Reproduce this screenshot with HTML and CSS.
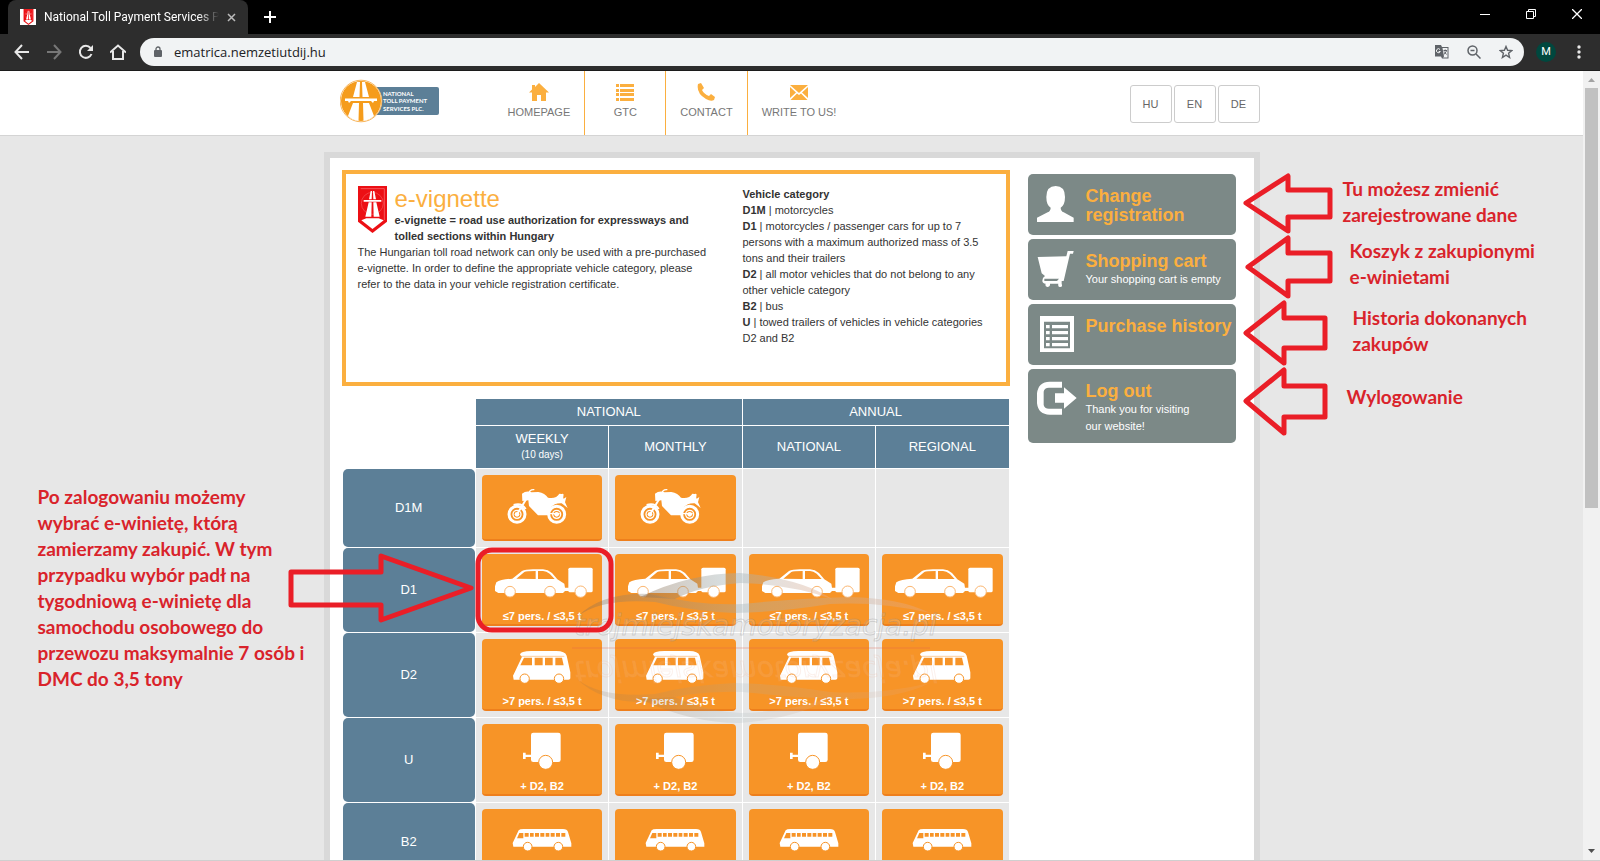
FILE: index.html
```html
<!DOCTYPE html>
<html lang="en">
<head>
<meta charset="utf-8">
<title>National Toll Payment Services PLC</title>
<link rel="stylesheet" href="styles.css">
</head>
<body>
<svg class="defs" aria-hidden="true">
  <symbol id="shield" viewBox="0 0 87 141">
    <path fill="#ec0f14" d="M0 0H87V107L43.500 141 0 107Z"/>
    <path fill="none" stroke="#f9797c" stroke-width="2" d="M8 8H79V102"/>
    <circle cx="43" cy="52" r="33" fill="none" stroke="#f4585c" stroke-width="2"/>
    <path fill="#fff" d="M38 15H42L41 40H33ZM45 15H49L54 40H46ZM17 42H70V47H17ZM32 49H41L40 92H22ZM46 49H55L65 92H47ZM10 103 25 97H62L77 103 43.500 129Z"/>
  </symbol>
  <symbol id="moto" viewBox="457 255 360 162">
    <g fill="none" stroke="#fff">
      <circle cx="562" cy="358" r="24" stroke-width="9"/><circle cx="562" cy="358" r="12" stroke-width="4"/>
      <circle cx="681" cy="358" r="24" stroke-width="9"/><circle cx="681" cy="358" r="12" stroke-width="4"/>
      <path stroke-width="6" d="M562 358 592 308M552 330Q576 322 588 342"/>
      <path stroke-width="4" d="M614 284Q600 282 596 298M650 356H690"/>
    </g>
    <circle cx="562" cy="358" r="7" fill="#fff"/><circle cx="681" cy="358" r="7" fill="#fff"/>
    <path fill="#fff" d="M577 296Q590 286 606 292L626 291Q646 295 655 308Q680 312 689 296L702 298 700 308 714 339 696 325Q672 324 661 341L655 361H625L598 333 596 316 578 318Z"/>
    <path fill="#fff" d="M690 298 700 296 701 312 710 306 706 322H688Z"/>
  </symbol>
  <symbol id="car" viewBox="457 492 360 162">
    <path fill="#fff" d="M500 574Q512 565 548 563L577 540Q586 535 610 535H640Q655 536 667 546L683 565 704 578 706 590H718V600H706L700 606H506L496 600V586Z"/>
    <path fill="#f79427" d="M560 563 584 543Q590 540 618 540V564ZM625 540H640Q650 540 660 548L675 564H625Z"/>
    <rect x="716" y="530" width="73" height="74" rx="5" fill="#fff"/>
    <g fill="#fff" stroke="#fbb670" stroke-width="3"><circle cx="541" cy="602" r="16"/><circle cx="661" cy="602" r="16"/><circle cx="753" cy="602" r="17"/></g>
  </symbol>
  <symbol id="van" viewBox="457 28 360 162">
    <path fill="#fff" d="M571 72Q572 61 605 61H680Q706 61 711 75L722 125V143Q722 147 716 147H552L550 135 558 119 577 78Z"/>
    <path fill="none" stroke="#fbb670" stroke-width="2" d="M574 77H704"/>
    <path fill="#f79427" d="M583 81H607V104H572ZM615 81H639V104H615ZM646 81H669V104H646ZM677 81H697L702 104H677Z"/>
    <g fill="#fff" stroke="#f79427" stroke-width="3"><circle cx="585" cy="144" r="14"/><circle cx="688" cy="144" r="14"/></g>
  </symbol>
  <symbol id="trailer" viewBox="457 283 360 162">
    <rect x="604" y="306" width="89" height="88" rx="7" fill="#fff"/>
    <path fill="#fff" d="M580 366H588V372H606V379H588V385H580Z"/>
    <circle cx="648" cy="395" r="21" fill="#fff" stroke="#f79427" stroke-width="3"/>
  </symbol>
  <symbol id="bus" viewBox="457 538 360 162">
    <path fill="#fff" d="M567 587Q570 583 582 583H700Q713 583 715 592L725 626V636H551L549 625Z"/>
    <path fill="#f79427" d="M569 595H581V611H562ZM585 595H597V606H585ZM601 595H612V606H601ZM616 595H628V606H616ZM632 595H644V606H632ZM648 595H659V606H648ZM663 595H675V606H663ZM679 595H691V606H679ZM695 595H707V606H695Z"/>
    <g fill="#fff" stroke="#f79427" stroke-width="3"><circle cx="594" cy="636" r="13"/><circle cx="686" cy="636" r="13"/></g>
  </symbol>
</svg>

<div class="tabstrip">
  <div class="tab">
    <span class="favicon"><svg width="11" height="16"><use href="#shield"/></svg></span>
    <span class="tab-title">National Toll Payment Services PLC</span>
    <button class="plain" aria-label="Close tab"><svg width="9" height="9" viewBox="0 0 9 9"><path d="M1 1 8 8M8 1 1 8" stroke="#bbb" stroke-width="1.500"/></svg></button>
  </div>
  <button class="plain newtab" aria-label="New tab"><svg width="12" height="12" viewBox="0 0 12 12"><path d="M6 0V12M0 6H12" stroke="#fff" stroke-width="2"/></svg></button>
  <div class="window-controls">
    <button class="plain" aria-label="Minimize"><svg width="10" height="10" viewBox="0 0 10 10"><path d="M0 5.500H10" stroke="#fff"/></svg></button>
    <button class="plain" aria-label="Restore"><svg width="10" height="10" viewBox="0 0 10 10" fill="none" stroke="#fff"><path d="M.5 2.500H7.500V9.500H.5ZM2.500 2.500V.5H9.500V7.500H7.500"/></svg></button>
    <button class="plain" aria-label="Close"><svg width="10" height="10" viewBox="0 0 10 10"><path d="M0 0 10 10M10 0 0 10" stroke="#fff" stroke-width="1.300"/></svg></button>
  </div>
</div>

<div class="toolbar">
  <div class="nav-buttons">
    <button class="plain" aria-label="Back"><svg width="16" height="16" viewBox="0 0 16 16" fill="none" stroke="#e8e8e8" stroke-width="2"><path d="M15 8H2M8 1 1.500 8 8 15"/></svg></button>
    <button class="plain" aria-label="Forward"><svg width="16" height="16" viewBox="0 0 16 16" fill="none" stroke="#777" stroke-width="2"><path d="M1 8H14M8 1 14.500 8 8 15"/></svg></button>
    <button class="plain" aria-label="Reload"><svg width="16" height="16" viewBox="0 0 16 16"><path d="M13.500 10A6 6 0 1 1 12.500 4" fill="none" stroke="#e8e8e8" stroke-width="2"/><path d="M15 1V7H9Z" fill="#e8e8e8"/></svg></button>
    <button class="plain" aria-label="Home"><svg width="16" height="16" viewBox="0 0 16 16" fill="none" stroke="#e8e8e8" stroke-width="2"><path d="M0 8.500 8 1.500 16 8.500M3 7V15H13V7"/></svg></button>
  </div>
  <div class="omnibox">
    <svg width="10" height="12" viewBox="0 0 10 12"><rect x="1" y="4" width="8" height="7" rx="1" fill="#5f6368"/><path d="M3 5V3A2 2 0 0 1 7 3V5" fill="none" stroke="#5f6368" stroke-width="1.300"/></svg>
    <input class="url" aria-label="Address" value="ematrica.nemzetiutdij.hu">
    <button class="plain" aria-label="Translate"><svg width="14" height="14" viewBox="0 0 14 14"><path d="M0 0H6L7 2H13.500V13.500H7L6 11.500H0Z" fill="#5f6368"/><path d="M7.500 3H12.500V12.500H8L9 11.500Z" fill="#f1f3f4"/><path d="M5 4.500A2 2 0 1 0 5.300 6.500H3.700" fill="none" stroke="#f1f3f4"/><path d="M8.500 5.500H12M10.200 4.500V5.500M11.500 6 9 9.500M9.200 6.500 11.500 9.500" stroke="#5f6368" fill="none"/></svg></button>
    <button class="plain" aria-label="Zoom out"><svg width="14" height="14" viewBox="0 0 14 14" fill="none" stroke="#5f6368" stroke-width="1.500"><circle cx="5.500" cy="5.500" r="4.500"/><path d="M9 9 13.500 13.500M3.500 5.500H7.500"/></svg></button>
    <button class="plain" aria-label="Bookmark"><svg width="14" height="14" viewBox="0 0 14 14" fill="none" stroke="#5f6368" stroke-width="1.400"><path d="M7 1.500 8.600 5.300 12.800 5.600 9.600 8.300 10.600 12.500 7 10.200 3.400 12.500 4.400 8.300 1.200 5.600 5.400 5.300Z"/></svg></button>
  </div>
  <button class="avatar">M</button>
  <button class="plain" aria-label="Menu"><svg width="4" height="14" viewBox="0 0 4 14" fill="#e8e8e8"><circle cx="2" cy="2" r="1.700"/><circle cx="2" cy="7" r="1.700"/><circle cx="2" cy="12" r="1.700"/></svg></button>
</div>

<div class="viewport">
  <div class="page">
    <header class="site-header">
      <div class="header-inner">
        <a class="logo" href="#" aria-label="National Toll Payment Services Plc.">
          <svg width="100" height="44" viewBox="0 0 100 44">
            <rect x="20" y="8" width="79" height="28" rx="2" fill="#5c7f97"/>
            <circle cx="21" cy="22" r="20.500" fill="#f59c1c" stroke="#fff"/><circle cx="21" cy="22" r="20.800" fill="none" stroke="#f8b760"/>
            <path fill="#fff" d="M17 3H20L19.500 18H13ZM22 3H25L29 18H22.500ZM5 19.500H37V22H34L33 24 31 22H11L9 24 8 22H5ZM13 24H19L18.500 42Q12 41 8 37ZM23 24H29L34 37Q30 41 23.500 42Z"/>
            <text class="logo-text" x="43" y="17">NATIONAL</text>
            <text class="logo-text" x="43" y="24">TOLL PAYMENT</text>
            <text class="logo-text" x="43" y="32">SERVICES PLC.</text>
          </svg>
        </a>
        <nav class="menu">
          <a href="#"><svg width="20" height="18" viewBox="0 0 20 18"><path fill="#fbaf3f" d="M10 0 20 9.500H17V18H12V12H8V18H3V9.500H0L3 6.500V2H6V4Z"/></svg>HOMEPAGE</a>
          <a href="#"><svg width="20" height="18" viewBox="0 0 20 18"><path fill="#fbaf3f" d="M1 1H4V4H1ZM5 1H19V4H5ZM1 6H4V9H1ZM5 6H19V9H5ZM1 10H4V13H1ZM5 10H19V13H5ZM1 15H4V18H1ZM5 15H19V18H5Z"/></svg>GTC</a>
          <a href="#"><svg width="20" height="18" viewBox="0 0 20 18"><path fill="#fbaf3f" d="M2 1 5 0 8 5 6 7Q8 11 13 13L15 11 19 14 18 17Q15 19 10 16Q0 10 2 1Z"/></svg>CONTACT</a>
          <a href="#"><svg width="20" height="18" viewBox="0 0 20 18"><path fill="#fbaf3f" d="M1 2H19L10 10ZM1 4 7 9.500 1 15ZM19 4V15L13 9.500ZM8 10.500 10 12 12 10.500 18.500 17H1.500Z"/></svg>WRITE TO US!</a>
        </nav>
        <div class="langs"><button>HU</button><button>EN</button><button>DE</button></div>
      </div>
    </header>

    <div class="stage">
      <main class="panel">
        <div class="content">
          <section class="info">
            <div>
              <svg class="shield" width="29" height="47"><use href="#shield"/></svg>
              <div class="info-head">
                <h1>e-vignette</h1>
                <strong>e-vignette = road use authorization for expressways and tolled sections within Hungary</strong>
              </div>
              <p>The Hungarian toll road network can only be used with a pre-purchased e-vignette. In order to define the appropriate vehicle category, please refer to the data in your vehicle registration certificate.</p>
            </div>
            <div>
              <p><b>Vehicle category</b></p>
              <p><b>D1M</b> | motorcycles</p>
              <p><b>D1</b> | motorcycles / passenger cars for up to 7 persons with a maximum authorized mass of 3.5 tons and their trailers</p>
              <p><b>D2</b> | all motor vehicles that do not belong to any other vehicle category</p>
              <p><b>B2</b> | bus</p>
              <p><b>U</b> | towed trailers of vehicles in vehicle categories D2 and B2</p>
            </div>
          </section>

          <table class="rates">
            <thead>
              <tr class="r-group"><td class="blank" rowspan="2"></td><th colspan="2">NATIONAL</th><th colspan="2">ANNUAL</th></tr>
              <tr class="r-period"><th>WEEKLY<small>(10 days)</small></th><th>MONTHLY</th><th>NATIONAL</th><th>REGIONAL</th></tr>
            </thead>
            <tbody>
              <tr class="r-short"><th scope="row">D1M</th>
                <td><button aria-label="D1M weekly"><svg><use href="#moto"/></svg></button></td>
                <td><button aria-label="D1M monthly"><svg><use href="#moto"/></svg></button></td><td></td><td></td></tr>
              <tr><th scope="row">D1</th>
                <td><button><svg><use href="#car"/></svg>≤7 pers. / ≤3,5 t</button></td>
                <td><button><svg><use href="#car"/></svg>≤7 pers. / ≤3,5 t</button></td>
                <td><button><svg><use href="#car"/></svg>≤7 pers. / ≤3,5 t</button></td>
                <td><button><svg><use href="#car"/></svg>≤7 pers. / ≤3,5 t</button></td></tr>
              <tr><th scope="row">D2</th>
                <td><button><svg><use href="#van"/></svg>&gt;7 pers. / ≤3,5 t</button></td>
                <td><button><svg><use href="#van"/></svg>&gt;7 pers. / ≤3,5 t</button></td>
                <td><button><svg><use href="#van"/></svg>&gt;7 pers. / ≤3,5 t</button></td>
                <td><button><svg><use href="#van"/></svg>&gt;7 pers. / ≤3,5 t</button></td></tr>
              <tr><th scope="row">U</th>
                <td><button><svg><use href="#trailer"/></svg>+ D2, B2</button></td>
                <td><button><svg><use href="#trailer"/></svg>+ D2, B2</button></td>
                <td><button><svg><use href="#trailer"/></svg>+ D2, B2</button></td>
                <td><button><svg><use href="#trailer"/></svg>+ D2, B2</button></td></tr>
              <tr class="r-last"><th scope="row">B2</th>
                <td><button aria-label="B2 weekly"><svg><use href="#bus"/></svg></button></td>
                <td><button aria-label="B2 monthly"><svg><use href="#bus"/></svg></button></td>
                <td><button aria-label="B2 annual national"><svg><use href="#bus"/></svg></button></td>
                <td><button aria-label="B2 annual regional"><svg><use href="#bus"/></svg></button></td></tr>
            </tbody>
          </table>
        </div>

        <aside class="side">
          <a href="#"><svg width="40" height="38" viewBox="0 0 120 114"><path fill="#fff" d="M56 3Q84 3 84 36Q84 60 71 68Q71 78 80 82L110 98V111H0V98L32 82Q41 78 41 68Q28 60 28 36Q28 3 56 3Z"/></svg>
            <span><b>Change registration</b></span></a>
          <a href="#"><svg width="40" height="38" viewBox="0 0 120 114"><path fill="#fff" d="M2 21 88 19 92 3H110L108 11H99L80 93H60L66 86H22V93H74V101Q78 112 68 111Q62 110 64 101H39Q40 111 31 111Q23 110 26 101Q16 100 16 92Q16 83 24 78L14 70Z"/></svg>
            <span><b>Shopping cart</b><small>Your shopping cart is empty</small></span></a>
          <a href="#"><svg width="40" height="38" viewBox="0 0 120 114"><path fill="#fff" fill-rule="evenodd" d="M9 3H111V111H9ZM21 20V100H99V20Z"/><path fill="#fff" d="M27 30H38V40H27ZM45 30H93V40H45ZM27 48H38V58H27ZM45 48H93V58H45ZM27 66H38V76H27ZM45 66H93V76H45ZM27 84H38V94H27ZM45 84H93V94H45Z"/></svg>
            <span><b>Purchase history</b></span></a>
          <a class="tall" href="#"><svg width="40" height="38" viewBox="0 0 120 114"><path fill="#fff" d="M75 5V23H36Q22 23 20 35V75Q22 86 36 86H75V104H38Q4 104 0 70V40Q4 5 38 5ZM54 40H81V22L119 54 81 86V68H54Z"/></svg>
            <span><b>Log out</b><small>Thank you for visiting<br>our website!</small></span></a>
        </aside>
      </main>

      <svg class="watermark" width="400" height="180" viewBox="560 560 400 180" aria-hidden="true">
        <defs><linearGradient id="wm"><stop offset="0" stop-color="#8a6a4a"/><stop offset=".5" stop-color="#9fb4bc"/><stop offset="1" stop-color="#e9ab88"/></linearGradient></defs>
        <g id="swoosh" fill="url(#wm)">
          <path opacity=".35" d="M577 617Q602 592 650 594Q700 606 742 604Q800 598 850 597Q900 598 930 613Q880 601 830 604Q780 612 735 613Q690 611 655 602Q600 598 577 617Z"/>
          <path opacity=".4" d="M640 597Q690 573 740 573Q800 578 832 599Q790 584 740 583Q700 586 675 599Z"/>
        </g>
        <text class="wm-text" x="574" y="635">trojmiejskamotoryzacja.pl</text>
        <g transform="matrix(1 0 0 -1 0 1296)" opacity=".5">
          <use href="#swoosh"/>
          <text class="wm-text wm-pink" x="574" y="635">trojmiejskamotoryzacja.pl</text>
        </g>
        <path d="M572 648H930" stroke="#e2604a" opacity=".4"/>
      </svg>

      <svg class="marks" width="1048" height="500" viewBox="288 152 1048 500" aria-hidden="true">
        <g fill="none" stroke="#ea1e27" stroke-width="5" stroke-linejoin="round">
          <path d="M1246 203 1288 176V190H1330V217H1288V231Z"/>
          <path d="M1248 267 1288 238V253H1330V281H1288V296Z"/>
          <path d="M1246 333 1284 303V318H1325V348H1284V363Z"/>
          <path d="M1246 401 1284 370V386H1325V417H1284V433Z"/>
          <path d="M291 572H381V556L471 588 381 620V605H291Z"/>
          <rect x="478" y="550" width="133" height="80" rx="14"/>
        </g>
      </svg>
      <p class="note note-left">Po zalogowaniu możemy<br>wybrać e-winietę, którą<br>zamierzamy zakupić. W tym<br>przypadku wybór padł na<br>tygodniową e-winietę dla<br>samochodu osobowego do<br>przewozu maksymalnie 7 osób i<br>DMC do 3,5 tony</p>
      <p class="note note-change">Tu możesz zmienić<br>zarejestrowane dane</p>
      <p class="note note-cart">Koszyk z zakupionymi<br>e-winietami</p>
      <p class="note note-history">Historia dokonanych<br>zakupów</p>
      <p class="note note-logout">Wylogowanie</p>
    </div>
  </div>
  <div class="scrollbar" aria-hidden="true">
    <svg width="17" height="17" viewBox="0 0 17 17"><path d="M5 11 8.500 7 12 11Z" fill="#a3a3a3"/></svg>
    <div class="thumb"></div>
    <svg width="17" height="17" viewBox="0 0 17 17"><path d="M5 6 8.500 10 12 6Z" fill="#505050"/></svg>
  </div>
</div>
</body>
</html>
```

FILE: styles.css
```css
* { box-sizing: border-box; }
body {
  margin: 0;
  height: 100vh;
  display: flex;
  flex-direction: column;
  overflow: hidden;
  background: #e7e7e7;
  color: #333;
  font: 11px/16px "Liberation Sans", Arial, sans-serif;
}
p, h1 { margin: 0; }
button, input { font: inherit; }
a { color: inherit; text-decoration: none; }
.defs { position: absolute; width: 0; height: 0; }
.plain { display: flex; border: 0; padding: 0; background: none; }

/* browser frame */
.tabstrip { display: flex; align-items: center; height: 34px; background: #000; padding-left: 8px; }
.tab {
  display: flex; align-items: center; gap: 8px;
  width: 240px; height: 34px; padding: 0 12px;
  background: #2d2d2d; border-radius: 8px 8px 0 0;
}
.favicon { display: flex; justify-content: center; width: 16px; background: #fff; }
.tab-title {
  flex: 1; overflow: hidden; white-space: nowrap;
  color: #fff; font: 12px/16px Roboto, sans-serif;
  -webkit-mask-image: linear-gradient(90deg, #000 88%, transparent);
  mask-image: linear-gradient(90deg, #000 88%, transparent);
}
.newtab { margin-left: 16px; }
.window-controls { display: flex; gap: 36px; margin: -6px 18px 0 auto; }
.toolbar {
  display: flex; align-items: center;
  height: 37px; padding: 0 19px 0 14px;
  background: #2d2d2d; border-bottom: 1px solid #1c1c1c;
}
.nav-buttons { display: flex; gap: 16px; margin-right: 14px; }
.omnibox {
  flex: 1; display: flex; align-items: center; gap: 18px;
  height: 28px; padding: 0 11px 0 13px; border-radius: 14px; background: #f1f3f4;
}
.url {
  flex: 1; border: 0; padding: 0; margin-left: -7px; background: none;
  color: #202124; font: 13px/20px "Open Sans", sans-serif;
}
.avatar {
  width: 20px; height: 20px; margin: 0 21px 0 12px; padding: 0;
  border: 0; border-radius: 10px; background: #00473e; color: #fff; font: 11px/20px Roboto, sans-serif;
}

/* page frame */
.viewport { flex: 1; min-height: 0; display: flex; border-bottom: 1px solid #cfcfcf; }
.page { flex: 1; overflow: hidden; }
.scrollbar { width: 17px; display: flex; flex-direction: column; justify-content: space-between; background: #f1f1f1; }
.thumb { height: 420px; margin: 0 2px auto; background: #c1c1c1; }

/* site header */
.site-header { background: #fff; border-bottom: 1px solid #d4d4d4; }
.header-inner {
  display: flex; max-width: 936px; height: 64px; margin: 0 auto; padding-left: 16px;
}
.logo { display: flex; align-items: flex-start; padding-top: 8px; }
.logo-text { font: bold 6px Lato, sans-serif; fill: #fff; }
.menu { display: flex; margin-left: 54px; }
.menu a {
  display: flex; flex-direction: column; align-items: center; gap: 2px;
  min-width: 81px; padding: 12px 14px; color: #777; line-height: 18px;
}
.menu a + a { border-left: 1px solid #fbaf3f; }
.langs { display: flex; gap: 2px; align-items: flex-start; margin-left: auto; padding-top: 14px; }
.langs button {
  width: 42px; height: 38px; padding: 0; border: 1px solid #ccc; border-radius: 3px;
  background: #fff; color: #666;
}

/* main panel */
.stage { position: relative; max-width: 936px; margin: 16px auto 0; }
.panel {
  display: flex; align-items: flex-start; gap: 18px;
  padding: 12px 18px 12px 12px; border: 6px solid #d9d9d9; background: #fff;
}
.content { flex: 1; }
.info {
  display: grid; grid-template-columns: 358px 1fr; gap: 27px;
  min-height: 216px; padding: 12px; border: 4px solid #fbaf3f;
}
.shield { float: left; }
.info-head { margin-left: 37px; }
h1 { color: #fbaf3f; font-size: 24px; font-weight: normal; line-height: 26px; }

.rates { width: 100%; margin-top: 12px; border-spacing: 1px; table-layout: fixed; color: #fff; }
.rates th, .rates td { height: 84px; padding: 0; text-align: center; vertical-align: middle; }
.rates th { background: #5c7f97; font-size: 13px; font-weight: normal; }
.rates td { background: #e7e7e7; vertical-align: top; }
.rates .blank { height: auto; background: none; }
.rates small { display: block; font-size: 10px; }
.rates .r-group th { height: 26px; }
.rates .r-period th { height: 42px; }
.rates tbody th { border-radius: 5px; }
.rates .r-short th, .rates .r-short td { height: 77px; }
.rates .r-last th, .rates .r-last td { height: 78px; }
.rates td button {
  display: block; width: calc(100% - 12px); height: 72px; margin: 6px; padding: 0;
  border: 0; border-bottom: 2px solid #ee7f1c; border-radius: 4px;
  background: #f79427; color: #fff; font-weight: bold; line-height: 14px; overflow: hidden;
}
.rates .r-short button, .rates .r-last button { height: 66px; }
.rates td svg { display: block; width: 120px; height: 54px; }

.side { width: 208px; margin-top: 4px; display: flex; flex-direction: column; gap: 4px; }
.side a {
  display: flex; gap: 9px; min-height: 61px; padding: 11px 0 0 9px;
  border-radius: 5px; background: #7c8987; color: #fff;
}
.side .tall { min-height: 74px; }
.side svg { flex: none; }
.side span { padding-top: 2px; }
.side b { display: block; color: #fbaf3f; font-size: 18px; line-height: 19px; }
.side small { display: block; font-size: 11px; line-height: 17px; }

/* drawings and notes laid over the page */
.watermark { position: absolute; left: 236px; top: 408px; }
.marks { position: absolute; left: -36px; top: 0; pointer-events: none; }
.wm-text {
  font: italic 28px "DejaVu Sans", sans-serif;
  fill: #fff; fill-opacity: .15; stroke: #8a8a8a; stroke-opacity: .3; stroke-width: 1px;
}
.wm-pink { stroke: #e9a080; }
.note { position: absolute; color: #d9232b; font: bold 19px/26px Lato, Carlito, sans-serif; white-space: nowrap; }
.note-left { left: -286px; top: 332px; }
.note-change { left: 1019px; top: 24px; }
.note-cart { left: 1026px; top: 86px; }
.note-history { left: 1029px; top: 153px; }
.note-logout { left: 1023px; top: 232px; }
```
